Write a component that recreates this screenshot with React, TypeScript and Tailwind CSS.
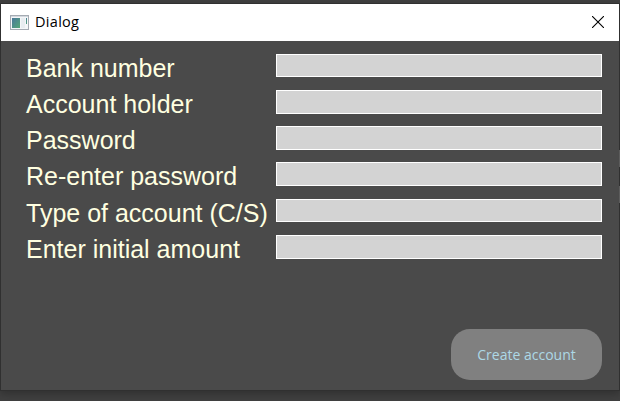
const fields = [
  { label: "Bank number", row: "h-9", input: "h-[23px]" },
  { label: "Account holder", row: "h-9", input: "h-6" },
  { label: "Password", row: "h-9", input: "h-6" },
  { label: "Re-enter password", row: "h-[37px]", input: "h-6" },
  { label: "Type of account (C/S)", row: "h-9", input: "h-[23px]" },
  { label: "Enter initial amount", row: "h-9", input: "h-6" },
];

function WindowIcon() {
  return (
    <svg width="19" height="15" viewBox="0 0 19 15" shapeRendering="crispEdges">
      <defs>
        <linearGradient id="screen" x1="0" y1="0" x2="1" y2="1">
          <stop offset="0" stopColor="#4a789b" />
          <stop offset="1" stopColor="#55a878" />
        </linearGradient>
      </defs>
      <rect x="0.5" y="0.5" width="18" height="14" fill="#f4f6f8" stroke="#a5abb3" />
      <rect x="1" y="1" width="17" height="1" fill="#d3d8de" />
      <rect x="2" y="3" width="8" height="10" fill="url(#screen)" />
      <rect x="11" y="3" width="4" height="10" fill="#e8edf1" />
      <rect x="16" y="3" width="1" height="6" fill="url(#screen)" />
    </svg>
  );
}

function TitleBar() {
  return (
    <header className="flex h-[37px] shrink-0 items-center bg-white pr-[15px] pl-[9px]">
      <WindowIcon />
      <span className="mb-[2px] ml-[6px] font-['Open_Sans',sans-serif] text-[14.5px] leading-5 tracking-[0.3px] text-black">
        Dialog
      </span>
      <button type="button" aria-label="Close" className="mb-px ml-auto">
        <svg width="12" height="12" viewBox="0 0 12 12" fill="none" stroke="#000" strokeWidth="1.1">
          <path d="M0 0L12 12M12 0L0 12" />
        </svg>
      </button>
    </header>
  );
}

export default function App() {
  return (
    <div className="relative h-[401px] w-[620px] overflow-hidden bg-[#404040] pt-[3px]">
      <main className="flex h-[388px] flex-col border border-[#303030] bg-[#4a4a4a] shadow-[0_3px_8px_rgba(0,0,0,0.25)]">
        <TitleBar />
        <form className="flex flex-1 flex-col pt-[13px] pr-[17px] pb-[10px] pl-[25px]">
          {fields.map(({ label, row, input }) => (
            <label key={label} className={`flex items-start ${row}`}>
              <span className="w-[250px] font-['Liberation_Sans',Arial,sans-serif] text-[25px] leading-[29px] whitespace-nowrap text-[#ffffe0]">
                {label}
              </span>
              <input className={`w-[326px] border border-white bg-[#d3d3d3] outline-none ${input}`} />
            </label>
          ))}
          <button
            type="button"
            className="mt-auto h-[51px] w-[151px] self-end rounded-[19px] bg-[#808080] font-['Open_Sans',sans-serif] text-[14px] text-[#add8e6]"
          >
            Create account
          </button>
        </form>
      </main>
      {/* Edges of the parent window's fields showing past the dialog */}
      <i className="absolute top-[150px] right-0 h-[17px] w-px bg-[#5c5c5c]" />
      <i className="absolute top-[186px] right-0 h-[17px] w-px bg-[#5c5c5c]" />
    </div>
  );
}
